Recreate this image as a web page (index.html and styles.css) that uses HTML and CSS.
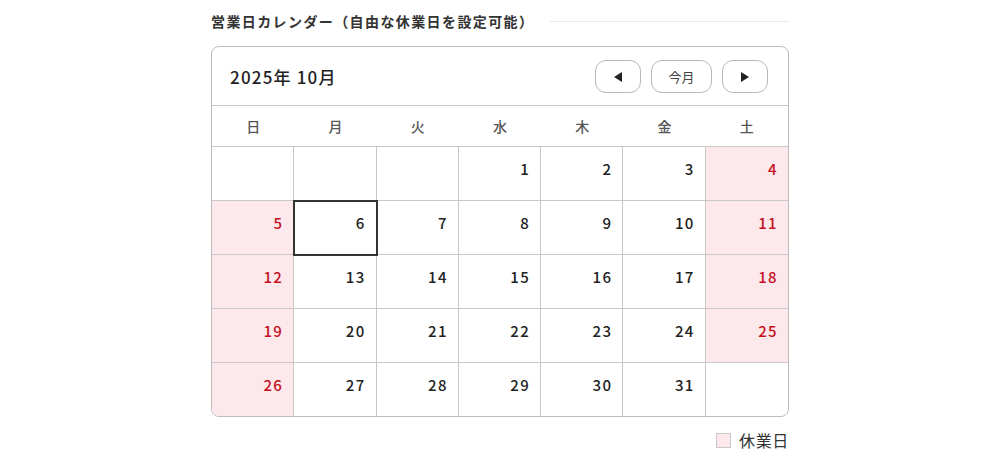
FILE: index.html
```html
<!DOCTYPE html>
<html lang="ja">
<head>
<meta charset="utf-8">
<link rel="stylesheet" href="styles.css">
</head>
<body>
<div class="wrap">
  <div class="title-row">
    <h2 class="title">営業日カレンダー（自由な休業日を設定可能）</h2>
    <span class="title-line"></span>
  </div>
  <div class="cal">
    <div class="cal-head">
      <div class="month">2025年 10月</div>
      <div class="nav">
        <button class="btn btn-arrow" aria-label="前月"><svg width="10" height="12" viewBox="0 0 10 12"><path d="M9 1 L1 6 L9 11 Z" fill="#222"/></svg></button>
        <button class="btn btn-today">今月</button>
        <button class="btn btn-arrow" aria-label="翌月"><svg width="10" height="12" viewBox="0 0 10 12"><path d="M1 1 L9 6 L1 11 Z" fill="#222"/></svg></button>
      </div>
    </div>
    <div class="grid">
      <div class="dow">日</div><div class="dow">月</div><div class="dow">火</div><div class="dow">水</div><div class="dow">木</div><div class="dow">金</div><div class="dow">土</div>

      <div class="cell"></div><div class="cell"></div><div class="cell"></div><div class="cell">1</div><div class="cell">2</div><div class="cell">3</div><div class="cell off">4</div>
      <div class="cell off">5</div><div class="cell today">6</div><div class="cell">7</div><div class="cell">8</div><div class="cell">9</div><div class="cell">10</div><div class="cell off">11</div>
      <div class="cell off">12</div><div class="cell">13</div><div class="cell">14</div><div class="cell">15</div><div class="cell">16</div><div class="cell">17</div><div class="cell off">18</div>
      <div class="cell off">19</div><div class="cell">20</div><div class="cell">21</div><div class="cell">22</div><div class="cell">23</div><div class="cell">24</div><div class="cell off">25</div>
      <div class="cell off last">26</div><div class="cell last">27</div><div class="cell last">28</div><div class="cell last">29</div><div class="cell last">30</div><div class="cell last">31</div><div class="cell last"></div>
    </div>
  </div>
  <div class="legend">
    <span class="swatch"></span><span class="legend-text">休業日</span>
  </div>
</div>
</body>
</html>
```

FILE: styles.css
```css
* { box-sizing: border-box; }
html, body { margin: 0; padding: 0; background: #fff; }
body {
  font-family: "Noto Sans CJK JP", "Noto Sans", sans-serif;
  color: #222;
}
.wrap {
  width: 578px;
  margin: 0 auto;
  padding-top: 10px;
}
.title-row {
  display: flex;
  align-items: center;
  gap: 16px;
  height: 22px;
}
.title {
  margin: 0;
  font-size: 14px;
  font-weight: 700;
  color: #333;
  white-space: nowrap;
  letter-spacing: 0.1em;
}
.title-line {
  flex: 1;
  height: 1px;
  background: #e8e8e8;
}
.cal {
  margin-top: 14px;
  border: 1px solid #bdbdbd;
  border-radius: 8px;
  overflow: hidden;
}
.cal-head {
  height: 59px;
  display: flex;
  align-items: center;
  justify-content: space-between;
  padding: 0 20px 0 18px;
  border-bottom: 1px solid #c8c8c8;
}
.month {
  font-size: 17px;
  font-weight: 500;
  color: #222;
  letter-spacing: 0.07em;
}
.nav {
  display: flex;
  gap: 10px;
  padding-top: 1px;
}
.btn {
  height: 33px;
  border: 1px solid #b8b8b8;
  border-radius: 11px;
  background: #fff;
  font-family: inherit;
  font-size: 13px;
  color: #444;
  display: flex;
  align-items: center;
  justify-content: center;
  padding: 0;
  cursor: pointer;
}
.btn-arrow { width: 46px; }
.btn-today { width: 61px; }
.grid {
  display: grid;
  grid-template-columns: repeat(7, 1fr);
}
.dow {
  height: 41px;
  display: flex;
  align-items: center;
  justify-content: center;
  font-size: 14px;
  font-weight: 500;
  color: #555;
  border-bottom: 1px solid #c8c8c8;
}
.cell {
  height: 54px;
  border-right: 1px solid #c8c8c8;
  border-bottom: 1px solid #c8c8c8;
  text-align: right;
  padding: 11px 10px 0 0;
  font-size: 15px;
  font-weight: 500;
  color: #222;
  letter-spacing: 0.09em;
  position: relative;
}
.cell:nth-child(7n) { border-right: none; }
.cell.last { border-bottom: none; height: 53px; }
.cell.off {
  background: #fde9ec;
  color: #c4101f;
}
.cell.today {
  outline: 2px solid #333;
  outline-offset: -1px;
  z-index: 1;
}
.legend {
  display: flex;
  justify-content: flex-end;
  align-items: center;
  gap: 8px;
  margin-top: 11px;
}
.swatch {
  width: 15px;
  height: 15px;
  background: #fde9ec;
  border: 1px solid #c8c8c8;
}
.legend-text {
  font-size: 16px;
  color: #333;
  letter-spacing: 0.04em;
}
```
